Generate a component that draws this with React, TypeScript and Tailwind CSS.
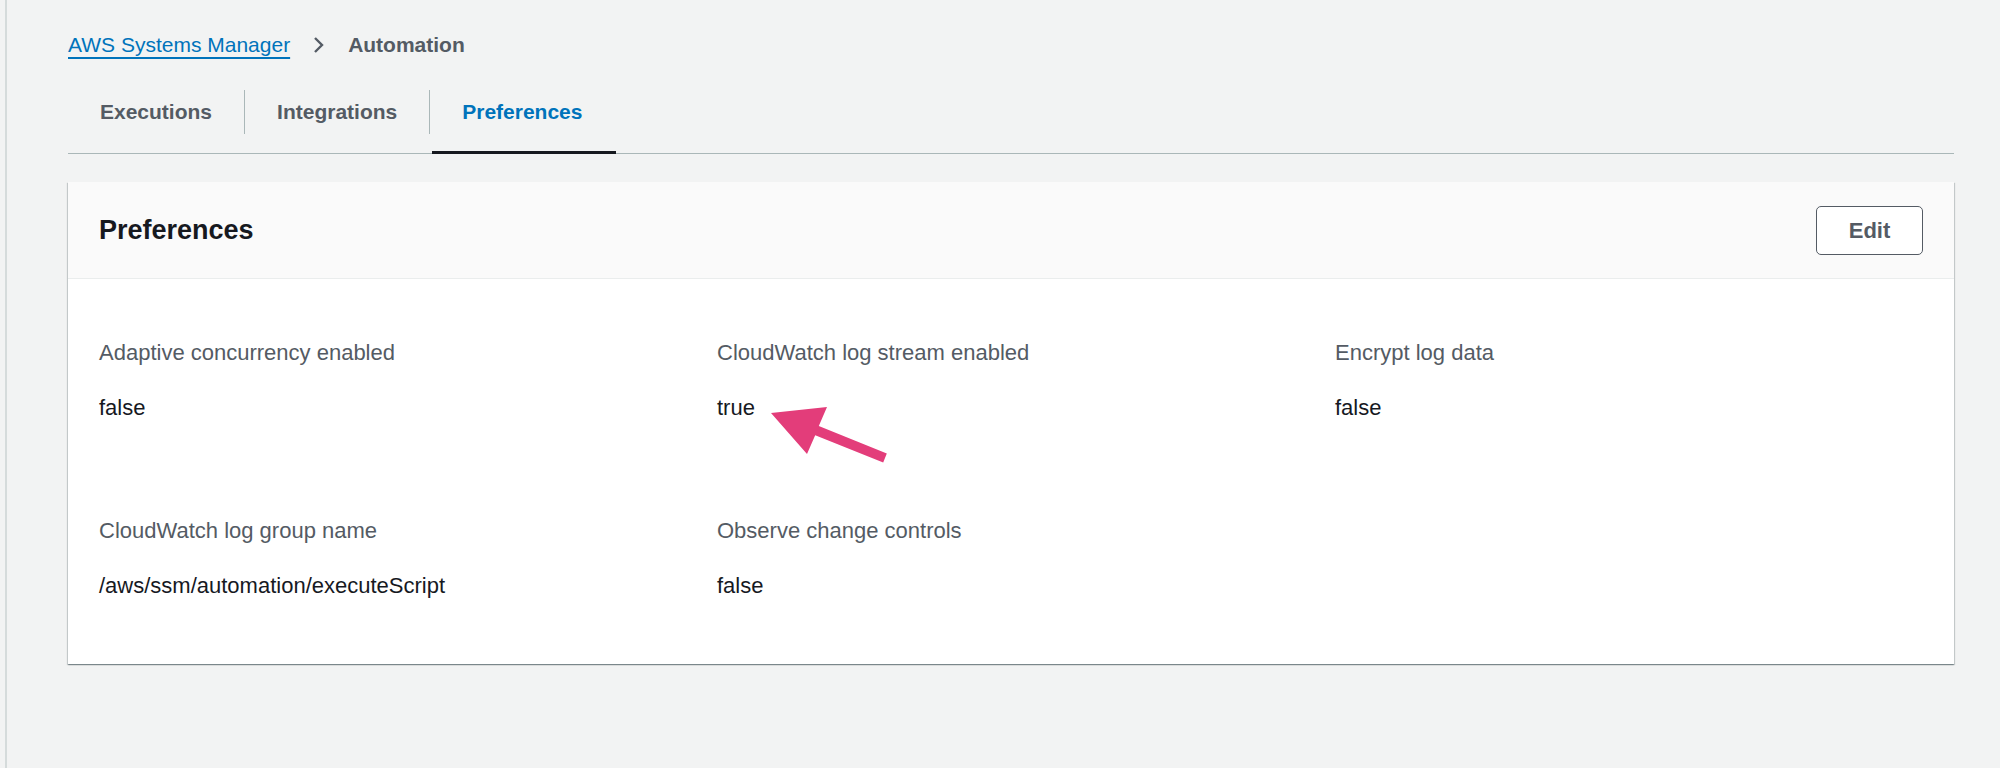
import React from 'react';

const tabs = ['Executions', 'Integrations', 'Preferences'];

const fields = [
  { label: 'Adaptive concurrency enabled', value: 'false' },
  { label: 'CloudWatch log stream enabled', value: 'true' },
  { label: 'Encrypt log data', value: 'false' },
  { label: 'CloudWatch log group name', value: '/aws/ssm/automation/executeScript' },
  { label: 'Observe change controls', value: 'false' },
];

const App: React.FC = () => {
  return (
    <div className="h-[768px] w-full bg-[#f2f3f3] font-['Liberation_Sans',Arial,sans-serif] flex">
      {/* left panel edge */}
      <div className="w-[5px] shrink-0" />
      <div className="w-[2px] shrink-0 bg-[#d5dbdb]" />

      <div className="flex-1 pl-[61px] pr-[46px]">
        {/* Breadcrumb */}
        <nav className="pt-[30px] h-[60px] flex items-center gap-[23px] text-[21px] leading-[30px]">
          <a className="text-[#0073bb] underline underline-offset-[5px] decoration-[1.5px]">AWS Systems Manager</a>
          <svg width="12" height="18" viewBox="0 0 12 18" className="text-[#545b64]">
            <path d="M2 2l7 7-7 7" fill="none" stroke="currentColor" strokeWidth="2.4" />
          </svg>
          <span className="font-bold text-[#545b64]">Automation</span>
        </nav>

        {/* Tabs */}
        <div className="mt-[10px] flex items-center border-b border-[#aab7b8]">
          {tabs.map((t, i) => (
            <React.Fragment key={t}>
              {i > 0 && <div className="w-px h-[44px] bg-[#aab7b8]" />}
              <div
                className={
                  'relative h-[83px] flex items-center px-[32px] text-[21px] font-bold ' +
                  (t === 'Preferences' ? 'text-[#0073bb]' : 'text-[#545b64]')
                }
              >
                {t}
                {t === 'Preferences' && (
                  <div className="absolute left-[2px] right-[-2px] bottom-[-1px] h-[3px] bg-[#16191f]" />
                )}
              </div>
            </React.Fragment>
          ))}
        </div>

        {/* Card */}
        <div className="relative mt-[28px] bg-white shadow-[0_1px_1px_0_rgba(0,28,36,0.3),1px_1px_1px_0_rgba(0,28,36,0.15),-1px_1px_1px_0_rgba(0,28,36,0.15)]">
          <div className="h-[97px] bg-[#fafafa] border-b border-[#eaeded] px-[31px] flex items-center justify-between">
            <h2 className="text-[27px] font-bold text-[#16191f]">Preferences</h2>
            <button className="w-[107px] h-[49px] rounded-[5px] border-[1.5px] border-[#545b64] bg-white text-[22px] font-bold text-[#545b64]">
              Edit
            </button>
          </div>

          <div className="px-[31px] pt-[59px] pb-[63px] grid grid-cols-3 gap-x-[30px] gap-y-[93px]">
            {fields.map((f) => (
              <div key={f.label} className="flex flex-col gap-[25px] leading-[30px]">
                <div className="text-[22px] text-[#545b64]">{f.label}</div>
                <div className="text-[22px] text-[#16191f]">{f.value}</div>
              </div>
            ))}
          </div>

          {/* annotation arrow */}
          <svg
            className="absolute left-[692px] top-[218px]"
            width="135"
            height="70"
            viewBox="0 0 135 70"
          >
            <polygon
              points="11,13 67,7 58.8,25.9 126.8,53.4 123.2,62.6 55.2,35.2 47,54"
              fill="#e33d7a"
            />
          </svg>
        </div>
      </div>
    </div>
  );
};

export default App;
